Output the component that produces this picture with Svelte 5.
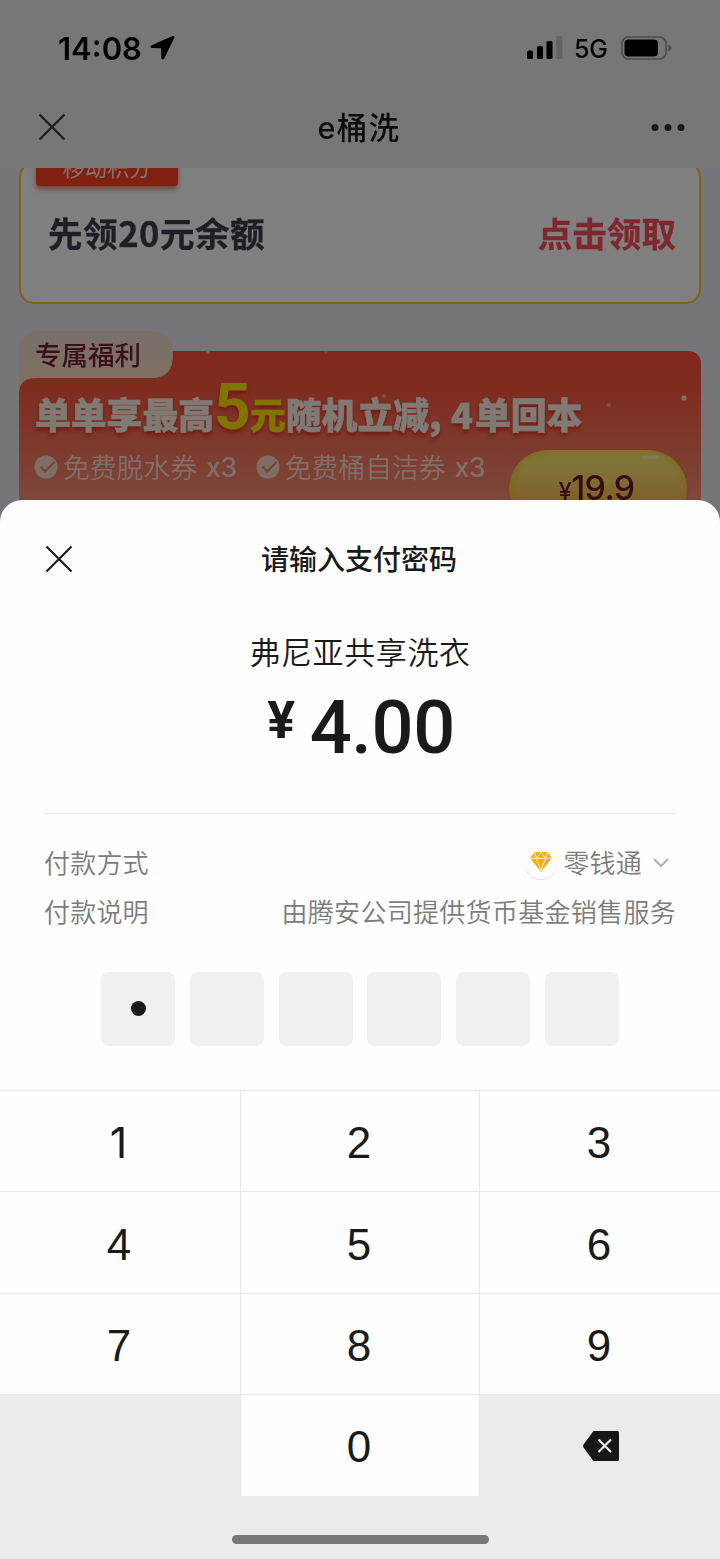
<script lang="ts">
  const keys = ['1', '2', '3', '4', '5', '6', '7', '8', '9'];
  const benefits = ['免费脱水券', '免费桶自洁券'];
  const length = 6;

  let password = $state('0');

  function press(key: string) {
    if (password.length < length) password += key;
  }

  function erase() {
    password = password.slice(0, -1);
  }
</script>

<div class="screen">
  <div class="page">
    <header>
      <div class="status">
        <span class="time">14:08</span>
        <svg class="locate" width="26" height="26" viewBox="0 0 26 26">
          <path d="M22.6 1.1 1.6 10.2c-1.7.8-1.3 2.9.5 2.9l9 .2.2 9.4c0 2 2.3 2.3 3.1.6l9.9-20.5c.6-1.300-.4-2.200-1.700-1.700z" />
        </svg>
        <svg class="signal" width="36" height="24" viewBox="0 0 36 24">
          <rect x="0" y="14.500" width="6" height="8.500" rx="1.600" />
          <rect x="10" y="10" width="6" height="13" rx="1.600" />
          <rect x="19.500" y="5" width="6" height="18" rx="1.600" />
          <rect x="29.300" y="0" width="6.200" height="23" rx="1.600" fill="#c6c6c6" />
        </svg>
        <span class="net">5G</span>
        <svg class="battery" width="51" height="24" viewBox="0 0 51 24">
          <rect x="1" y="1" width="44" height="22" rx="6.500" fill="none" stroke="#959595" stroke-width="1.700" />
          <rect x="3.500" y="3.500" width="33.500" height="17" rx="4" />
          <path d="M47.500 8.500c3.300 1.500 3.300 5.500 0 7z" fill="#858585" />
        </svg>
      </div>
      <div class="nav">
        <svg width="28" height="28" viewBox="0 0 28 28" stroke="#3c3c3c" stroke-width="2.400">
          <path d="M1.500 1.500 26.500 26.500M26.500 1.500 1.500 26.500" />
        </svg>
        <span class="name">e桶洗</span>
        <svg width="34" height="8" viewBox="0 0 34 8" fill="#303030">
          <circle cx="4" cy="4.500" r="3.500" />
          <circle cx="17" cy="4.500" r="3.500" />
          <circle cx="30" cy="4.500" r="3.500" />
        </svg>
      </div>
    </header>

    <div class="content">
      <div class="coupon">
        <span class="ribbon">移动积分</span>
        <div class="offer">
          <span class="gift">先领20元余额</span>
          <span class="claim">点击领取</span>
        </div>
      </div>

      <div class="promo">
        <div class="tab">
          <svg width="154" height="62" viewBox="0 0 154 62">
            <defs>
              <linearGradient id="tab" x1="0" y1="0" x2="0" y2="1">
                <stop offset="0" stop-color="#efdfd5" />
                <stop offset="0.750" stop-color="#ffdfc4" />
              </linearGradient>
            </defs>
            <path d="M0 62V20Q0 0 20 0H131Q154 0 154 24T131 47H18Q0 47 0 62z" fill="url(#tab)" />
          </svg>
          <span>专属福利</span>
        </div>
        <div class="headline">
          <span>单单享最高</span><span class="five">5</span><span class="yuan">元</span><span>随机立减</span><span class="comma">,</span><span class="four">4</span><span>单回本</span>
        </div>
        <div class="benefits">
          {#each benefits as benefit}
            <div class="benefit">
              <svg width="24" height="24" viewBox="0 0 24 24">
                <circle cx="12" cy="12" r="11.500" fill="#ffdcca" />
                <path d="M6.500 11.500 11 16.500 20.500 7" fill="none" stroke="#e58268" stroke-width="2" />
              </svg>
              <span>{benefit}</span>
              <b>x3</b>
            </div>
          {/each}
        </div>
        <div class="price"><i>¥</i>19.9</div>
        <svg class="sparks" width="682" height="150" viewBox="0 0 682 150" fill="#fff">
          <circle cx="189" cy="1" r="2" opacity="0.600" />
          <circle cx="307" cy="1" r="1.500" opacity="0.300" />
          <circle cx="365" cy="45" r="2" opacity="0.400" />
          <circle cx="590" cy="54" r="2" opacity="0.400" />
          <circle cx="665" cy="47" r="2.600" opacity="0.800" />
          <ellipse cx="632" cy="106" rx="9" ry="1.800" opacity="0.500" />
          <circle cx="638" cy="106" r="2" opacity="0.600" />
        </svg>
      </div>
    </div>
  </div>

  <div class="sheet">
    <div class="title">
      <svg width="28" height="28" viewBox="0 0 28 28" stroke="#1a1a1a" stroke-width="2.200">
        <path d="M1.500 1.500 26.500 26.500M26.500 1.500 1.500 26.500" />
      </svg>
      <span>请输入支付密码</span>
    </div>

    <div class="merchant">弗尼亚共享洗衣</div>
    <div class="amount"><span class="yen">¥</span><span>4.00</span></div>

    <div class="details">
      <div class="row">
        <span>付款方式</span>
        <div class="method">
          <span class="coin">
            <svg width="22" height="20" viewBox="0 0 22 20">
              <path d="M4.500 0h13L22 6 11 20 0 6z" fill="#f2b010" />
              <path d="M0 6.300h22M4.500.3 6.500 6.300 11 .3l4.500 6 2-6M6.500 6.300 11 19l4.500-12.700" fill="none" stroke="#fff3d0" stroke-width="1" />
            </svg>
          </span>
          <span>零钱通</span>
          <svg width="16" height="10" viewBox="0 0 16 10" fill="none" stroke="#b0b0b0" stroke-width="2.200">
            <path d="M1 1 8 8 15 1" />
          </svg>
        </div>
      </div>
      <div class="row">
        <span>付款说明</span>
        <span class="note">由腾安公司提供货币基金销售服务</span>
      </div>
    </div>

    <div class="boxes">
      {#each { length } as _, i}
        <div class="box" class:filled={i < password.length}></div>
      {/each}
    </div>

    <div class="keypad">
      {#each keys as key}
        <button class="key" class:one={key === '1'} onclick={() => press(key)}>{key}</button>
      {/each}
      <div class="key blank"></div>
      <button class="key" onclick={() => press('0')}>0</button>
      <button class="key blank delete" aria-label="删除" onclick={erase}>
        <svg width="36" height="30" viewBox="0 0 36 30">
          <path d="M10.500 0H34.500Q36 0 36 1.500V28.500Q36 30 34.500 30H10.500L.5 16.500Q-.3 15 .5 13.500z" fill="#171717" />
          <path d="M15.500 8.500 28 21M28 8.500 15.500 21" stroke="#ebebeb" stroke-width="2.200" />
        </svg>
      </button>
    </div>

    <div class="home"><span></span></div>
  </div>
</div>

<style>
  :global(body) { margin: 0; background: #ebebeb; }

  .screen { width: 720px; height: 1559px; overflow: hidden; font-family: Inter, 'Noto Sans CJK SC', sans-serif; color: #1a1a1a; }

  /* page dimmed behind the payment sheet */
  .page { height: 524px; overflow: hidden; background: #ebe9f2; filter: brightness(0.5); }
  header { height: 168px; background: #ededed; position: relative; }
  .status { height: 88px; padding: 8px 48px 0 58px; box-sizing: border-box; display: flex; align-items: center; color: #000; }
  .time { width: 84px; font-size: 31px; font-weight: 600; white-space: nowrap; }
  .locate { margin-left: 8px; }
  .signal { margin-left: auto; }
  .net { width: 35px; margin: 2px 12px 0 11px; font-size: 25px; font-weight: 500; letter-spacing: -0.1px; }
  .nav { height: 78px; padding: 0 35px 0 38px; display: flex; align-items: center; justify-content: space-between; }
  .name { margin: 2px 0 0 1px; font-size: 30.500px; font-weight: 500; line-height: 40px; letter-spacing: 1.300px; }

  .content { height: 356px; padding: 0 19px; overflow: hidden; }
  .coupon { height: 142px; margin-top: -6px; box-sizing: border-box; border: 2px solid #f5c832; border-radius: 15px; background: #fff; }
  .ribbon { display: block; width: 142px; height: 48px; margin: -26px 0 0 15px; border-radius: 4px; background: #ff4020; color: #ffe6df; font-size: 22.300px; line-height: 60px; text-align: center; box-shadow: 0 3px 5px rgba(200, 40, 20, 0.6); }
  .offer { margin-top: 21px; padding: 0 23px 0 27px; display: flex; justify-content: space-between; font: 700 34.600px/50px 'Noto Sans CJK SC', sans-serif; color: #3c3e48; -webkit-text-stroke: 0.300px currentColor; }
  .gift { letter-spacing: 0.500px; }
  .claim { color: #ff4b57; }

  .promo { position: relative; height: 200px; margin-top: 47px; border-radius: 0 12px 0 0; background: linear-gradient(#ff5038, #fc5a42 22%, #f89074 75%, #f8a080); }
  .tab { position: absolute; left: 0; top: -20px; width: 154px; height: 62px; }
  .tab svg { display: block; }
  .tab span { position: absolute; left: 16px; top: 4px; font-size: 26.500px; font-weight: 500; line-height: 40px; color: #731e32; }
  .headline { height: 61px; padding: 27px 0 0 16px; display: flex; align-items: baseline; font: 900 35.800px/64px 'Noto Sans CJK SC', sans-serif; color: #fff1e8; text-shadow: 0 3px 4px #e03020; -webkit-text-stroke: 0.600px currentColor; }
  .five { width: 36px; font-family: Roboto, sans-serif; font-size: 64px; line-height: 60px; font-weight: 700; text-align: center; color: #ffe500; -webkit-text-stroke: 0; }
  .yuan { color: #ffe500; }
  .comma { width: 22px; }
  .four { width: 24px; font-size: 36px; }
  .benefits { padding: 7px 0 0 15px; display: flex; gap: 19px; }
  .benefit { display: flex; align-items: center; font-size: 26.800px; line-height: 40px; color: #ffded0; }
  .benefit span { margin: 2px 0 0 5px; font-weight: 350; }
  .benefit b { margin-left: 9px; font-size: 26.500px; font-weight: 500; letter-spacing: -0.3px; }
  .price { position: absolute; left: 490px; top: 99px; width: 178px; height: 78px; border-radius: 39px; background: linear-gradient(#fff068, #ffe070 30%, #ffbe50 65%); box-shadow: 0 0 3px #ff7430, inset 0 0 8px #ffc02c; font-size: 34px; font-weight: 500; line-height: 75px; text-align: center; color: #701428; letter-spacing: -0.700px; text-indent: -3px; }
  .price i { font-size: 24px; font-style: normal; }
  .sparks { position: absolute; left: 0; top: 0; }

  .sheet { position: relative; height: 1059px; margin-top: -24px; border-radius: 22px 22px 0 0; background: #fefefe; overflow: hidden; }
  .title { height: 118px; display: grid; grid-template-columns: 1fr auto 1fr; align-items: center; }
  .title svg { margin-left: 45px; }
  .title span { margin: 2px 2px 0 0; font-size: 28px; font-weight: 500; line-height: 40px; }
  .merchant { height: 70px; font-size: 31px; font-weight: 350; line-height: 70px; letter-spacing: 0.600px; text-align: center; }
  .amount { height: 125px; display: flex; justify-content: center; gap: 15px; padding-left: 2px; font: 500 74px/79px Roboto, sans-serif; letter-spacing: -0.400px; }
  .yen { font-size: 52px; line-height: 66px; font-weight: 700; }

  .details { height: 123px; margin: 0 44px; padding-top: 23px; box-sizing: border-box; border-top: 1px solid #e6e6e6; }
  .row { height: 49px; display: flex; justify-content: space-between; align-items: center; font-size: 26px; font-weight: 350; letter-spacing: 0.200px; color: #7c7c7c; }
  .note { letter-spacing: 0.300px; }
  .method { display: flex; align-items: center; padding-right: 7px; }
  .coin { display: flex; align-items: center; justify-content: center; width: 34px; height: 34px; margin: 0 5px 0 0; border-radius: 50%; box-shadow: 0 1px 1px rgba(0, 0, 0, 0.120); }
  .method > svg { margin: 3px 0 0 11px; }

  .boxes { margin-top: 36px; padding-bottom: 44px; display: flex; justify-content: center; gap: 14.700px; }
  .box { width: 74px; height: 74px; display: grid; place-items: center; border-radius: 8px; background: #f0f0f0; }
  .box.filled::after { content: ''; width: 15px; height: 15px; margin-top: -1px; border-radius: 50%; background: #1a1a1a; }

  .keypad { display: grid; grid-template-columns: 240px 1fr 240px; grid-template-rows: repeat(4, 100.400px); gap: 1px; padding-top: 1px; background: #e9e9e9; }
  .key { display: flex; align-items: center; justify-content: center; border: 0; padding: 4px 2px 0 0; background: #fefefe; color: #1a1a1a; font: 44px/1 'Liberation Sans', sans-serif; }
  .key.one { padding: 2px 3px 0 0; font-family: Inter, sans-serif; font-size: 43px; }
  .key.blank { background: #ebebeb; }
  .key.delete { padding: 1px 0 0; }
  .delete svg { margin-left: 2px; }
  .home { height: 63px; display: flex; justify-content: center; background: #ebebeb; }
  .home span { width: 257px; height: 9px; margin-top: 39px; border-radius: 5px; background: #777; }
</style>
